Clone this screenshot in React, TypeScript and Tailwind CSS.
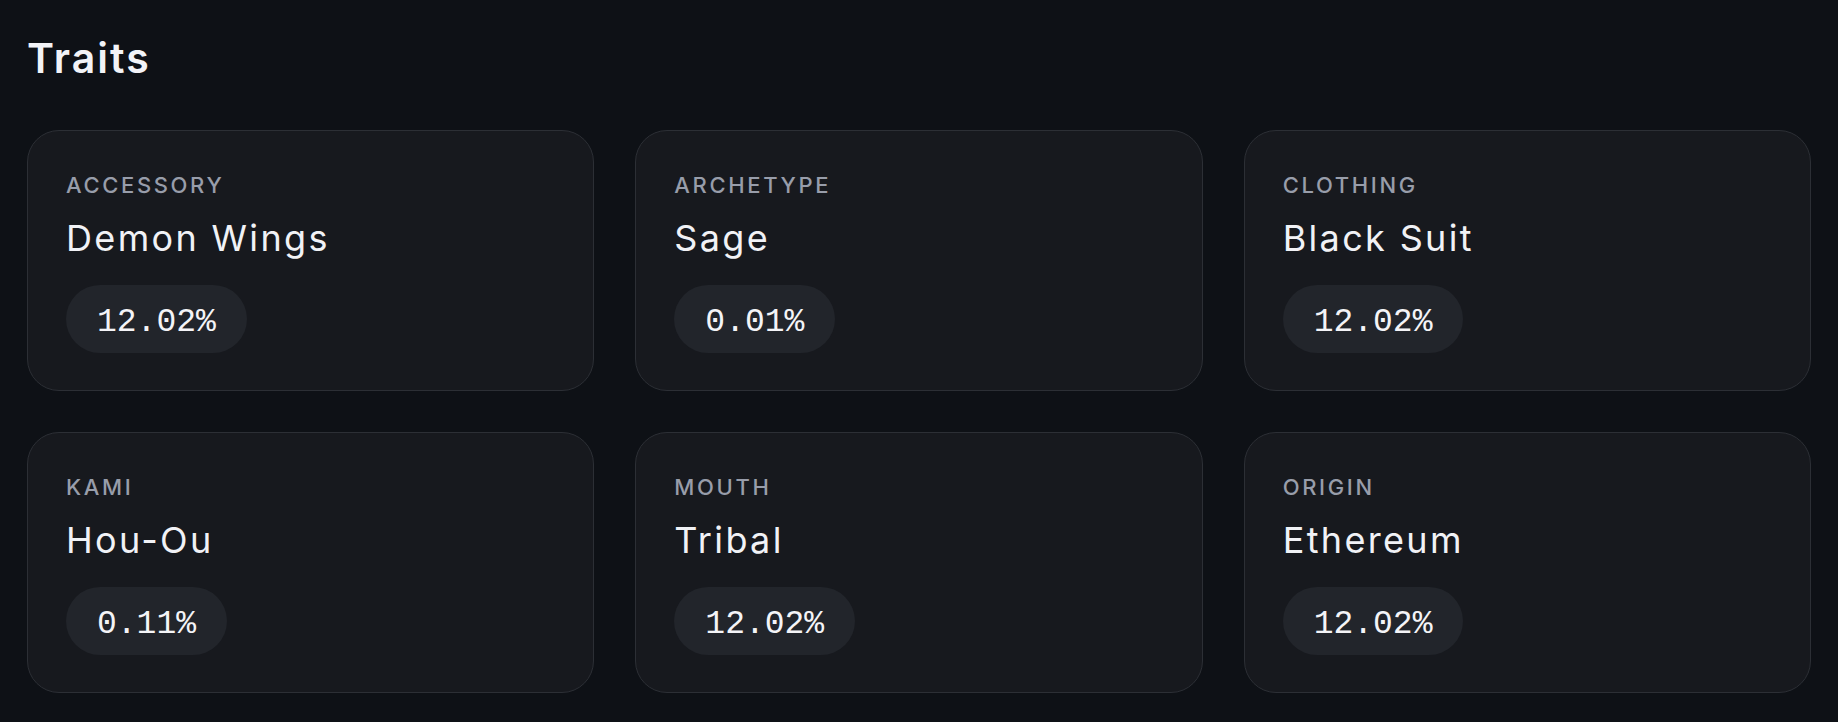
const traits = [
  { type: 'Accessory', value: 'Demon Wings', rarity: '12.02%' },
  { type: 'Archetype', value: 'Sage', rarity: '0.01%' },
  { type: 'Clothing', value: 'Black Suit', rarity: '12.02%' },
  { type: 'Kami', value: 'Hou-Ou', rarity: '0.11%' },
  { type: 'Mouth', value: 'Tribal', rarity: '12.02%' },
  { type: 'Origin', value: 'Ethereum', rarity: '12.02%' },
];

function TraitCard({ type, value, rarity }: { type: string; value: string; rarity: string }) {
  return (
    <div className="flex flex-col items-start rounded-[32px] border border-[#2c2f35] bg-[#17191e] px-[38px] pt-[40px] pb-[37px]">
      <span className="text-[22px] leading-[28px] font-medium uppercase tracking-[0.12em] text-[#989daa]">
        {type}
      </span>
      <span className="mt-[17px] text-[36px] leading-[44px] font-normal tracking-[0.065em] text-[#f1f2f6]">
        {value}
      </span>
      <span className="mt-[25px] h-[68px] rounded-full bg-[#22252b] px-[31px] pt-[8px] font-['Liberation_Mono',monospace] text-[33px] leading-[60px] text-[#f4f4f7] slashed-zero">
        {rarity}
      </span>
    </div>
  );
}

export default function App() {
  return (
    <div className="h-[722px] w-full bg-[#0e1116] px-[27px] pt-[34px] font-['Inter',sans-serif]">
      <h1 className="text-[41px] leading-[48px] font-semibold tracking-[0.05em] text-[#f2f3f7]">Traits</h1>
      <div className="mt-[48px] grid grid-cols-3 gap-x-[41px] gap-y-[41px]">
        {traits.map((t) => (
          <TraitCard key={t.type} {...t} />
        ))}
      </div>
    </div>
  );
}
